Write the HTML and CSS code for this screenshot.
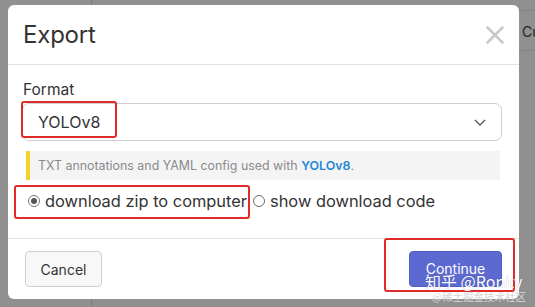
FILE: index.html
```html
<!DOCTYPE html>
<html lang="en">
<head>
  <meta charset="UTF-8">
  <title>Export</title>
  <link rel="stylesheet" href="styles.css">
</head>
<body>

  <!-- PAGE BEHIND THE MODAL -->
  <div class="backdrop-tab">Cu</div>

  <!-- EXPORT DIALOG -->
  <div class="dialog">
    <div class="dialog-header">
      <h1>Export</h1>
      <button class="close-btn" type="button" aria-label="Close">
        <svg width="18" height="18" viewBox="0 0 18 18">
          <path d="M1.5 1.5 L16.5 16.5 M16.5 1.5 L1.5 16.5" stroke="#c9c9c9" stroke-width="2.6" stroke-linecap="round"/>
        </svg>
      </button>
    </div>

    <div class="dialog-body">
      <label class="field-label" for="format">Format</label>
      <div class="select">
        <span id="format">YOLOv8</span>
        <svg class="chevron" width="12" height="7" viewBox="0 0 12 7">
          <path d="M1 1 L6 6 L11 1" fill="none" stroke="#555" stroke-width="1.3"/>
        </svg>
      </div>

      <div class="info">
        TXT annotations and YAML config used with <a href="#">YOLOv8</a>.
      </div>

      <div class="radio-row">
        <label class="radio"><span class="dot checked"></span>download zip to computer</label>
        <label class="radio"><span class="dot"></span>show download code</label>
      </div>
    </div>

    <div class="dialog-footer">
      <button class="btn btn-cancel" type="button">Cancel</button>
      <button class="btn btn-continue" type="button">Continue</button>
    </div>

    <!-- red annotation boxes -->
    <div class="mark mark-format"></div>
    <div class="mark mark-radio"></div>
    <div class="mark mark-continue"></div>
  </div>

  <div class="watermark">
    <span class="wm-main">知乎 @Ronky</span>
    <span class="wm-sub">@稀土掘金技术社区</span>
  </div>

</body>
</html>
```

FILE: styles.css
```css
body {
  margin: 0;
  padding: 5px 0 0 8px;
  height: 307px;
  box-sizing: border-box;
  overflow: hidden;
  background-color: #909090;
  background-image: linear-gradient(90deg, transparent 91px, #7c7c7c 91px, #7c7c7c 92px, transparent 92px);
  font-family: Inter, "Noto Sans", Arial, sans-serif;
  color: #333;
  position: relative;
}

.backdrop-tab {
  position: absolute;
  left: 519px;
  top: 10px;
  width: 30px;
  height: 39px;
  border-top: 1px solid #858585;
  border-bottom: 1px solid #858585;
  line-height: 42px;
  padding-left: 3px;
  font-size: 14px;
  color: #222;
}

.dialog {
  position: relative;
  width: 511px;
  height: 294px;
  background: #fff;
  border-radius: 6px;
  display: flex;
  flex-direction: column;
}

.dialog-header {
  height: 59px;
  border-bottom: 1px solid #e2e2e2;
  display: flex;
  align-items: center;
  justify-content: space-between;
  padding: 0 15px 0 15px;
}

.dialog-header h1 {
  margin: 0;
  font-size: 24px;
  font-weight: 400;
  color: #333;
  letter-spacing: -0.2px;
}

.close-btn {
  border: none;
  background: none;
  padding: 0;
  width: 18px;
  height: 18px;
  display: block;
}

.dialog-body {
  flex: 1;
  padding: 15px 17px 0 14px;
}

.field-label {
  display: block;
  font-size: 15.5px;
  line-height: 20px;
  padding-left: 1px;
}

.select {
  margin-top: 3px;
  height: 38px;
  box-sizing: border-box;
  border: 1px solid #cfcfcf;
  border-radius: 7px;
  display: flex;
  align-items: center;
  justify-content: space-between;
  padding: 0 15px 0 15px;
  font-size: 16px;
  color: #333;
}

.chevron {
  margin-top: 1px;
}

.info {
  margin: 10px 2px 0 4px;
  height: 29px;
  box-sizing: border-box;
  background: #f4f4f5;
  border-left: 4px solid #f2d22e;
  padding-left: 8px;
  line-height: 29px;
  font-size: 12.4px;
  color: #8a8a8a;
}

.info a {
  color: #1f88d4;
  font-weight: 600;
  text-decoration: none;
}

.radio-row {
  margin-top: 8px;
  display: flex;
  align-items: center;
  gap: 6px;
  height: 26px;
  padding-left: 6px;
}

.radio {
  display: flex;
  align-items: center;
  gap: 5px;
  font-size: 16.4px;
  color: #333;
}

.dot {
  width: 12px;
  height: 12px;
  box-sizing: border-box;
  border: 1px solid #6b6b6b;
  border-radius: 50%;
  background: #fff;
  position: relative;
}

.dot.checked {
  border-color: #777;
}

.dot.checked::after {
  content: "";
  position: absolute;
  left: 2px;
  top: 2px;
  width: 6px;
  height: 6px;
  border-radius: 50%;
  background: #555;
}

.dialog-footer {
  height: 61px;
  box-sizing: border-box;
  border-top: 1px solid #e2e2e2;
  display: flex;
  align-items: flex-start;
  justify-content: space-between;
  padding: 12px 17px 0 17px;
}

.btn {
  height: 36px;
  border-radius: 4px;
  font-family: inherit;
  font-size: 14px;
  cursor: pointer;
}

.btn-cancel {
  width: 77px;
  background: #f8f8f8;
  border: 1px solid #cfcfcf;
  color: #333;
}

.btn-continue {
  width: 93px;
  background: #5b69d0;
  border: 1px solid #5160c6;
  color: #fff;
  padding-bottom: 2px;
}

/* red boxes drawn over the screenshot */
.mark {
  position: absolute;
  border: 2px solid #e02b2b;
  border-radius: 3px;
  pointer-events: none;
}

.mark-format {
  left: 13px;
  top: 96px;
  width: 92px;
  height: 33px;
}

.mark-radio {
  left: 6px;
  top: 180px;
  width: 232px;
  height: 30px;
}

.mark-continue {
  left: 376px;
  top: 233px;
  width: 127px;
  height: 50px;
}

.watermark {
  position: absolute;
  left: 425px;
  top: 272px;
  display: flex;
  flex-direction: column;
  pointer-events: none;
}

.wm-main {
  font-family: "Noto Sans CJK SC", sans-serif;
  font-size: 16px;
  line-height: 18px;
  color: #fff;
  text-shadow: 0 0 1px rgba(0, 0, 0, 0.3);
}

.wm-sub {
  margin-left: 7px;
  font-family: "Noto Sans CJK SC", sans-serif;
  font-size: 10.5px;
  line-height: 14px;
  color: #d6d6d6;
}
```
